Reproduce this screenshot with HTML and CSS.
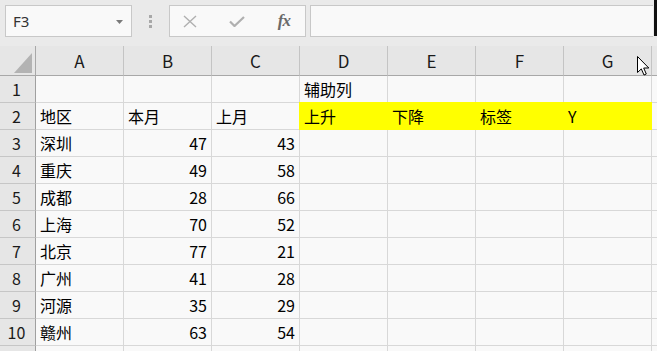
FILE: index.html
```html
<!DOCTYPE html>
<html lang="zh">
<head>
<meta charset="utf-8">
<title>Sheet</title>
<link rel="stylesheet" href="styles.css">
</head>
<body>
<div class="app">
  <div class="toolbar">
    <div class="namebox">
      <span class="ref">F3</span>
      <svg class="drop" width="7" height="4" viewBox="0 0 7 4"><path d="M0 0H7L3.5 4Z" fill="#7a7a7a"/></svg>
    </div>
    <div class="grip"><i></i><i></i><i></i></div>
    <div class="fxbox">
      <svg class="ico" width="14" height="13" viewBox="0 0 14 13"><path d="M1 1L13 12M13 1L1 12" stroke="#b0b0b0" stroke-width="1.4" fill="none"/></svg>
      <svg class="ico" width="16" height="11" viewBox="0 0 16 11"><path d="M1 5.5L5.5 10L15 1" stroke="#b0b0b0" stroke-width="2.2" fill="none"/></svg>
      <span class="fx">fx</span>
    </div>
    <div class="formula"></div>
    <div class="edge"></div>
  </div>

  <div class="sheet">
    <div class="hd corner"><span class="tri"></span></div>
    <div class="hd col">A</div><div class="hd col">B</div><div class="hd col">C</div><div class="hd col">D</div><div class="hd col">E</div><div class="hd col">F</div><div class="hd col">G</div><div class="hd col last"></div>

    <div class="rh">1</div><div class="c"></div><div class="c"></div><div class="c"></div><div class="c">辅助列</div><div class="c"></div><div class="c"></div><div class="c"></div><div class="c"></div>
    <div class="rh">2</div><div class="c">地区</div><div class="c">本月</div><div class="c">上月</div><div class="c y y1">上升</div><div class="c y">下降</div><div class="c y">标签</div><div class="c y">Y</div><div class="c"></div>
    <div class="rh">3</div><div class="c">深圳</div><div class="c n">47</div><div class="c n">43</div><div class="c"></div><div class="c"></div><div class="c"></div><div class="c"></div><div class="c"></div>
    <div class="rh">4</div><div class="c">重庆</div><div class="c n">49</div><div class="c n">58</div><div class="c"></div><div class="c"></div><div class="c"></div><div class="c"></div><div class="c"></div>
    <div class="rh">5</div><div class="c">成都</div><div class="c n">28</div><div class="c n">66</div><div class="c"></div><div class="c"></div><div class="c"></div><div class="c"></div><div class="c"></div>
    <div class="rh">6</div><div class="c">上海</div><div class="c n">70</div><div class="c n">52</div><div class="c"></div><div class="c"></div><div class="c"></div><div class="c"></div><div class="c"></div>
    <div class="rh">7</div><div class="c">北京</div><div class="c n">77</div><div class="c n">21</div><div class="c"></div><div class="c"></div><div class="c"></div><div class="c"></div><div class="c"></div>
    <div class="rh">8</div><div class="c">广州</div><div class="c n">41</div><div class="c n">28</div><div class="c"></div><div class="c"></div><div class="c"></div><div class="c"></div><div class="c"></div>
    <div class="rh">9</div><div class="c">河源</div><div class="c n">35</div><div class="c n">29</div><div class="c"></div><div class="c"></div><div class="c"></div><div class="c"></div><div class="c"></div>
    <div class="rh">10</div><div class="c">赣州</div><div class="c n">63</div><div class="c n">54</div><div class="c"></div><div class="c"></div><div class="c"></div><div class="c"></div><div class="c"></div>
    <div class="rh"></div><div class="c"></div><div class="c"></div><div class="c"></div><div class="c"></div><div class="c"></div><div class="c"></div><div class="c"></div><div class="c"></div>
  </div>

  <svg class="cursor" width="13" height="20" viewBox="0 0 13 20"><path d="M0.5 0.5V16.5L4.3 12.9L7 19L9.3 18L6.7 12H11.8Z" fill="#fff" stroke="#000" stroke-width="1"/></svg>
</div>
</body>
</html>
```

FILE: styles.css
```css
html, body {
  margin: 0;
  padding: 0;
  background: #f9f9f9;
}
.app {
  position: relative;
  width: 657px;
  height: 351px;
  overflow: hidden;
  font-family: "Noto Sans CJK SC", "Noto Sans", sans-serif;
}
.toolbar {
  height: 46px;
  box-sizing: border-box;
  padding: 5px 0 0 5px;
  display: flex;
  align-items: flex-start;
  background: #eaeaea;
}
.namebox {
  width: 127px;
  height: 32px;
  box-sizing: border-box;
  border: 1px solid #c8c8c8;
  background: #f9f9f9;
  display: flex;
  align-items: center;
  justify-content: space-between;
  padding: 0 8px 0 7px;
}
.ref {
  font-family: "Noto Sans", sans-serif;
  font-size: 15px;
  color: #333;
}
.drop { margin-top: 1px; }
.grip {
  width: 37px;
  height: 32px;
  display: flex;
  flex-direction: column;
  align-items: center;
  justify-content: center;
  gap: 2px;
}
.grip i {
  display: block;
  width: 3px;
  height: 3px;
  background: #a8a8a8;
}
.fxbox {
  width: 137px;
  height: 32px;
  box-sizing: border-box;
  border: 1px solid #c8c8c8;
  background: #f9f9f9;
  display: flex;
  align-items: center;
  padding: 0 15px 0 13px;
  justify-content: space-between;
}
.fx {
  font-family: "Liberation Serif", serif;
  font-style: italic;
  font-weight: bold;
  font-size: 17px;
  color: #6a6a6a;
  letter-spacing: -1px;
}
.formula {
  margin-left: 4px;
  width: 343px;
  height: 32px;
  box-sizing: border-box;
  border: 1px solid #c8c8c8;
  border-right: none;
  background: #f9f9f9;
}
.edge {
  margin-left: auto;
  margin-top: -5px;
  width: 3px;
  height: 36px;
  background: #111;
}
.sheet {
  display: grid;
  grid-template-columns: 36px repeat(7, 88px) 1fr;
  grid-template-rows: 30px repeat(11, 27px);
}
.sheet > div {
  box-sizing: border-box;
  border-right: 1px solid #d8d8d8;
  border-bottom: 1px solid #d8d8d8;
  font-size: 16px;
  line-height: 26px;
  color: #000;
  white-space: nowrap;
}
.sheet > .hd {
  background: #e6e6e6;
  border-right-color: #c4c4c4;
  border-bottom-color: #a8a8a8;
  text-align: center;
  font-size: 17px;
  line-height: 28px;
  padding-top: 1px;
  color: #1a1a1a;
}
.sheet > .corner {
  border-right-color: #a8a8a8;
  display: flex;
  justify-content: flex-end;
  align-items: flex-end;
  padding: 0 3px 2px 0;
}
.tri {
  display: block;
  width: 18px;
  height: 20px;
  background: #b3b3b3;
  clip-path: polygon(100% 0, 100% 100%, 0 100%);
}
.sheet > .last { border-right: none; }
.sheet > .rh {
  background: #e6e6e6;
  border-right-color: #a0a0a0;
  border-bottom-color: #c6c6c6;
  text-align: center;
  padding-right: 2px;
  color: #1a1a1a;
}
.sheet > .c {
  padding: 0 4px;
}
.sheet > .n {
  text-align: right;
}
.sheet > .y {
  background: #ffff00;
  border-right-color: #ffff00;
  border-bottom-color: #ffff00;
  box-shadow: 0 -1px 0 #ffff00;
}
.sheet > .y1 {
  box-shadow: 0 -1px 0 #ffff00, -1px -1px 0 #ffff00, -1px 0 0 #ffff00;
}
.cursor {
  position: absolute;
  left: 637px;
  top: 56px;
}
```
